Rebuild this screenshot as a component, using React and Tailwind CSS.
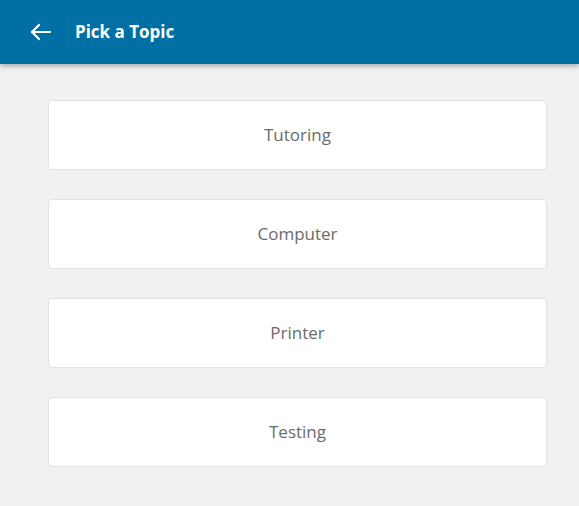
import React from 'react'

const topics = ['Tutoring', 'Computer', 'Printer', 'Testing']

function BackArrow() {
  return (
    <svg width="22" height="18" viewBox="0 0 22 18" fill="none" stroke="white" strokeWidth="2.2" strokeLinecap="round" strokeLinejoin="round">
      <path d="M20 9H2" />
      <path d="M9 2L2 9l7 7" />
    </svg>
  )
}

export default function App() {
  return (
    <div className="min-h-[506px] bg-[#f1f1f1]" style={{ fontFamily: '"Open Sans", "Noto Sans", sans-serif' }}>
      {/* Header */}
      <header className="relative z-10 flex h-16 items-center bg-[#0070a4] shadow-[0_2px_5px_rgba(0,0,0,0.3)]">
        <button className="ml-[30px] flex items-center">
          <BackArrow />
        </button>
        <h1 className="ml-[23px] text-[17px] font-bold text-white">Pick a Topic</h1>
      </header>

      {/* Topics */}
      <div className="flex w-[499px] flex-col gap-[29px] ml-12 pt-9">
        {topics.map((t) => (
          <button
            key={t}
            className="flex h-[70px] items-center justify-center rounded border border-[#e2e2e2] bg-white text-[17px] text-[#6b6b6b]"
          >
            {t}
          </button>
        ))}
      </div>
    </div>
  )
}
